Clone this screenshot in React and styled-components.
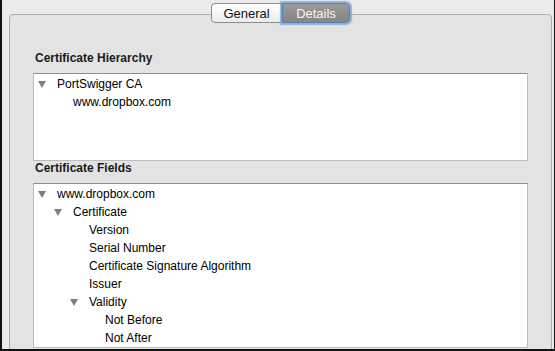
import styled, { createGlobalStyle } from 'styled-components'

const GlobalStyle = createGlobalStyle`
  html, body {
    margin: 0;
    padding: 0;
  }
  body {
    font-family: "Liberation Sans", Arial, sans-serif;
    color: #000;
  }
`

const Window = styled.div`
  box-sizing: border-box;
  height: 351px;
  overflow: hidden;
  background: #ebebeb;
  border-left: 2px solid #111;
  border-right: 1px solid #111;
  border-bottom: 2px solid #111;
  padding: 3px 2px 0 7px;
`

const TabBar = styled.div`
  position: relative;
  z-index: 1;
  display: flex;
  justify-content: center;
  height: 20px;
`

const Tab = styled.div`
  box-sizing: border-box;
  width: ${({ $width }) => $width}px;
  height: 20px;
  display: flex;
  align-items: center;
  justify-content: center;
  font-size: 13px;
  border: 1px solid ${({ $active }) => ($active ? '#5e7fa8' : '#8d8d8d')};
  border-radius: ${({ $first }) => ($first ? '4px 0 0 4px' : '0 4px 4px 0')};
  background: ${({ $active }) =>
    $active
      ? 'linear-gradient(#9a9a9a, #858585)'
      : 'linear-gradient(#ffffff, #ececec)'};
  color: ${({ $active }) => ($active ? '#f6f6f6' : '#111')};
  box-shadow: ${({ $active }) =>
    $active ? '0 0 1px 2px rgba(110, 160, 220, 0.75)' : 'none'};
`

const GroupBox = styled.div`
  box-sizing: border-box;
  margin-top: -9px;
  min-height: 380px;
  border: 1px solid #ababab;
  border-radius: 4px;
  background: #e3e3e3;
  padding: 36px 23px 0;
`

const SectionLabel = styled.div`
  font-size: 12px;
  font-weight: bold;
  line-height: 14px;
  padding-left: 2px;
  margin-bottom: 8px;
  color: #1a1a1a;
`

const TreeView = styled.div`
  box-sizing: border-box;
  height: ${({ $height }) => $height}px;
  background: #fff;
  border: 1px solid #bdbdbd;
  border-top-color: #8f8f8f;
  padding-top: 1px;
`

const Row = styled.div`
  display: flex;
  align-items: center;
  height: 18px;
  padding-left: ${({ $level }) => 4 + $level * 16}px;
  font-size: 12px;
  white-space: nowrap;
`

const Disclosure = styled.span`
  flex: none;
  width: 19px;
  display: flex;
  align-items: center;
`

function Triangle() {
  return (
    <svg width="8" height="7" viewBox="0 0 8 7">
      <polygon points="0,0 8,0 4,7" fill="#7d7d7d" />
    </svg>
  )
}

function Tree({ items, height }) {
  return (
    <TreeView $height={height}>
      {items.map(([level, label, open], i) => (
        <Row key={i} $level={level}>
          <Disclosure>{open && <Triangle />}</Disclosure>
          {label}
        </Row>
      ))}
    </TreeView>
  )
}

const hierarchy = [
  [0, 'PortSwigger CA', true],
  [1, 'www.dropbox.com', false],
]

const fields = [
  [0, 'www.dropbox.com', true],
  [1, 'Certificate', true],
  [2, 'Version', false],
  [2, 'Serial Number', false],
  [2, 'Certificate Signature Algorithm', false],
  [2, 'Issuer', false],
  [2, 'Validity', true],
  [3, 'Not Before', false],
  [3, 'Not After', false],
]

export default function App() {
  return (
    <>
      <GlobalStyle />
      <Window>
        <TabBar>
          <Tab $width={71} $first>
            General
          </Tab>
          <Tab $width={68} $active>
            Details
          </Tab>
        </TabBar>
        <GroupBox>
          <SectionLabel>Certificate Hierarchy</SectionLabel>
          <Tree items={hierarchy} height={88} />
          <SectionLabel>Certificate Fields</SectionLabel>
          <Tree items={fields} height={165} />
        </GroupBox>
      </Window>
    </>
  )
}
